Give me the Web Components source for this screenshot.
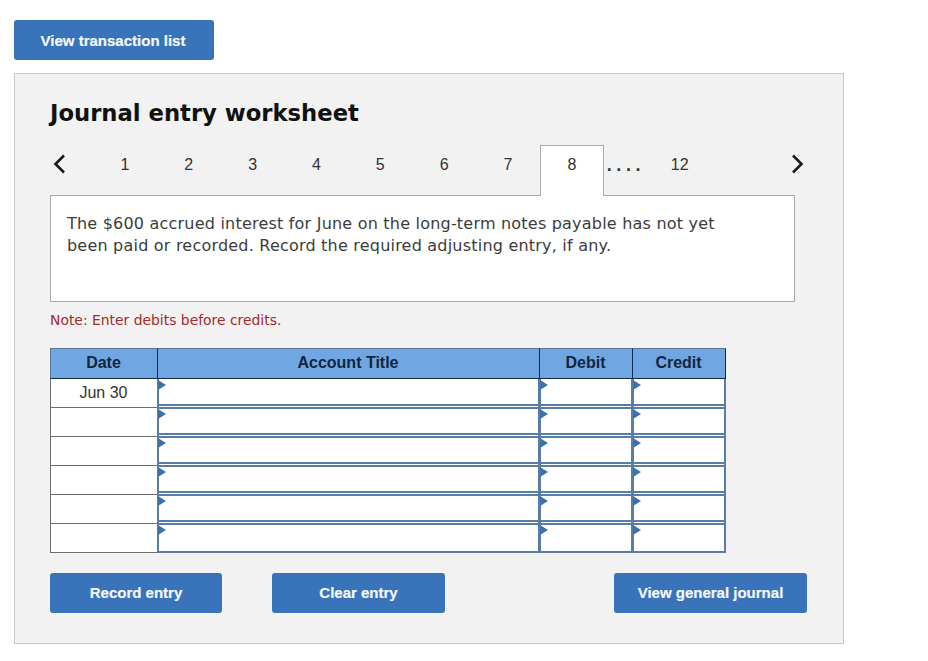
<!DOCTYPE html>
<html lang="en">
<head>
<meta charset="utf-8">
<title>Journal entry worksheet</title>
<style>
  html, body { margin: 0; background: #fff; }
  body { padding: 20px 0 0 14px; font-family: "DejaVu Sans", sans-serif; }
</style>
</head>
<body>
<action-button style="--w: 200px; --pr: 2px">View transaction list</action-button>
<journal-worksheet></journal-worksheet>

<script>
class ActionButton extends HTMLElement {
  constructor() {
    super();
    this.attachShadow({ mode: "open" });
    this.shadowRoot.innerHTML = `
      <style>
        :host {
          display: block;
          width: var(--w);
        }
        button {
          display: block;
          width: 100%;
          height: 40px;
          padding: 0 var(--pr, 0) var(--pb, 0) 0;
          background-color: #3973b9;
          color: #f4f8fc;
          border: none;
          border-radius: 3px;
          font: bold 15px "Liberation Sans", Arial, sans-serif;
          -webkit-text-stroke: 0.2px #f4f8fc;
          cursor: pointer;
        }
      </style>
      <button><slot></slot></button>
    `;
  }
}

class TabStrip extends HTMLElement {
  constructor() {
    super();
    this.attachShadow({ mode: "open" });
    const nums = [1, 2, 3, 4, 5, 6, 7, 8];
    const current = 8;
    this.shadowRoot.innerHTML = `
      <style>
        :host {
          display: flex;
          height: 50px;
          width: 745px;
          font: 16px "Liberation Sans", Arial, sans-serif;
          color: #333;
        }
        .arrow {
          width: 43px;
          height: 38px;
          flex: none;
        }
        .arrow svg { display: block; margin: 9px 0 0 2px; }
        .tab {
          flex: none;
          width: 63.85px;
          box-sizing: border-box;
          text-align: center;
          padding-top: 11px;
        }
        .tab.on {
          background: #fff;
          border: 1px solid #aaa;
          border-bottom: none;
          height: 51px;
          position: relative;
          z-index: 1;
          padding-top: 10px;
        }
        .dots {
          flex: none;
          width: 44px;
          padding: 10px 0 0 3px;
          box-sizing: border-box;
          font-size: 18px;
          font-weight: bold;
          letter-spacing: 4.6px;
        }
        .last { width: 64px; }
        .next { margin: 0 -9px 0 auto; width: auto; }
        .next svg { margin: 9px 0 0 0; }
      </style>
      <div class="arrow">
        <svg width="14" height="20" viewBox="0 0 14 20"><path d="M12 1.5 3.5 10l8.5 8.5" fill="none" stroke="#1a1a1a" stroke-width="2.6"/></svg>
      </div>
      ${nums.map(n => `<div class="tab${n === current ? " on" : ""}">${n}</div>`).join("")}
      <div class="dots">....</div>
      <div class="tab last">12</div>
      <div class="arrow next">
        <svg width="14" height="20" viewBox="0 0 14 20"><path d="M3 1.5l8.5 8.5L3 18.5" fill="none" stroke="#1a1a1a" stroke-width="2.6"/></svg>
      </div>
    `;
  }
}

class PromptBox extends HTMLElement {
  constructor() {
    super();
    this.attachShadow({ mode: "open" });
    this.shadowRoot.innerHTML = `
      <style>
        :host {
          display: block;
          box-sizing: border-box;
          width: 745px;
          height: 107px;
          padding: 17px 60px 0 16px;
          background: #fff;
          border: 1px solid #aaa;
          font: 16px/22px "DejaVu Sans", Verdana, sans-serif;
          letter-spacing: 0.21px;
          color: #3c3c3c;
        }
      </style>
      <slot></slot>
    `;
  }
}

class JournalTable extends HTMLElement {
  constructor() {
    super();
    this.attachShadow({ mode: "open" });
    const rows = ["Jun 30", "", "", "", "", ""];
    const input = (cls) => `<div class="input ${cls}"><div class="field"></div></div>`;
    this.shadowRoot.innerHTML = `
      <style>
        :host {
          display: grid;
          grid-template-columns: 108px 382px 93px 93px;
          grid-template-rows: 31px repeat(6, 29px);
          width: 676px;
          font: 16px "Liberation Sans", Arial, sans-serif;
          color: #333;
        }
        .head {
          background: #70a7e3;
          color: #12263f;
          font-weight: bold;
          text-align: center;
          line-height: 28px;
          padding-right: 1px;
          border-top: 1px solid #5a7697;
          border-right: 1px solid #0f2c4f;
          border-bottom: 1px solid #0f2c4f;
          box-sizing: border-box;
        }
        .head.first { border-left: 1px solid #5a7697; }
        .date {
          background: #fff;
          text-align: center;
          line-height: 27px;
          padding-right: 1px;
          border: 1px solid #6e6e6e;
          border-top: none;
          box-sizing: border-box;
        }
        .input {
          position: relative;
          display: flex;
          margin: 0 1px 0 -1px;
          padding-bottom: 2px;
          background: #fff;
          box-sizing: border-box;
          border-left: 2px solid #5a7da6;
          border-right: 1px solid #5a7da6;
        }
        .input.end { margin-right: 0; border-right-width: 2px; }
        .input.bottom { padding-bottom: 0; }
        .input::before {
          content: "";
          position: absolute;
          left: -1px;
          top: 1px;
          border-left: 8px solid #3d70ad;
          border-top: 5px solid transparent;
          border-bottom: 5px solid transparent;
        }
        .field {
          flex: 1;
          box-sizing: border-box;
          margin-top: -1px;
          border-top: 2px solid #5a7da6;
          border-bottom: 2px solid #5a7da6;
        }
        .input.top .field { margin-top: 0; border-top: none; }
      </style>
      <div class="head first">Date</div>
      <div class="head">Account Title</div>
      <div class="head">Debit</div>
      <div class="head">Credit</div>
      ${rows.map((d, i) => {
        const pos = i === 0 ? "top" : i === rows.length - 1 ? "bottom" : "";
        return `<div class="date">${d}</div>${input(pos)}${input(pos)}${input("end " + pos)}`;
      }).join("")}
    `;
  }
}

class JournalWorksheet extends HTMLElement {
  constructor() {
    super();
    this.attachShadow({ mode: "open" });
    this.shadowRoot.innerHTML = `
      <style>
        :host {
          display: block;
          box-sizing: border-box;
          width: 830px;
          height: 571px;
          margin-top: 13px;
          padding: 0 35px;
          background: #f2f2f2;
          border: 1px solid #c8c8c8;
        }
        h1 {
          margin: 0;
          padding-top: 24px;
          height: 71px;
          box-sizing: border-box;
          font: bold 22.7px/30px "DejaVu Sans", Verdana, sans-serif;
          color: #111;
        }
        .note {
          margin: 9px 0 0;
          height: 37px;
          font: 13.9px/18px "DejaVu Sans", Verdana, sans-serif;
          color: #a52a2a;
        }
        .actions {
          display: flex;
          margin-top: 20px;
          --pb: 2px;
        }
        .spacer { flex: 1; max-width: 169px; }
      </style>
      <h1>Journal entry worksheet</h1>
      <tab-strip></tab-strip>
      <prompt-box>The $600 accrued interest for June on the long-term notes payable has not yet been paid or recorded. Record the required adjusting entry, if any.</prompt-box>
      <p class="note">Note: Enter debits before credits.</p>
      <journal-table></journal-table>
      <div class="actions">
        <action-button style="--w: 172px">Record entry</action-button>
        <div style="width: 50px"></div>
        <action-button style="--w: 173px">Clear entry</action-button>
        <div class="spacer"></div>
        <action-button style="--w: 193px">View general journal</action-button>
      </div>
    `;
  }
}

customElements.define("action-button", ActionButton);
customElements.define("tab-strip", TabStrip);
customElements.define("prompt-box", PromptBox);
customElements.define("journal-table", JournalTable);
customElements.define("journal-worksheet", JournalWorksheet);
</script>
</body>
</html>
